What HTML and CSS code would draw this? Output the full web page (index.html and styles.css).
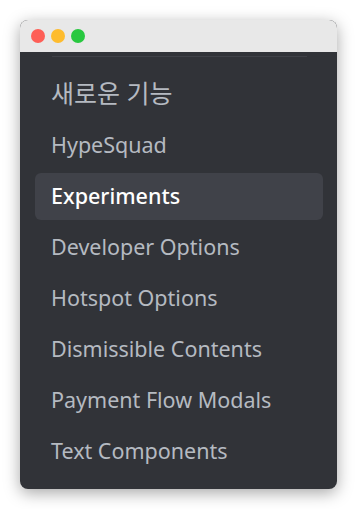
FILE: index.html
```html
<!DOCTYPE html>
<html>
  <head>
    <title>Settings</title>
    <link rel="stylesheet" href="styles.css">
  </head>
  <body>
    <div class="window">
      <div class="titlebar">
        <span class="light red"></span>
        <span class="light yellow"></span>
        <span class="light green"></span>
      </div>
      <div class="content">
        <div class="divider"></div>
        <div class="item korean">새로운 기능</div>
        <div class="item">HypeSquad</div>
        <div class="item selected">Experiments</div>
        <div class="item">Developer Options</div>
        <div class="item">Hotspot Options</div>
        <div class="item">Dismissible Contents</div>
        <div class="item">Payment Flow Modals</div>
        <div class="item">Text Components</div>
      </div>
    </div>
  </body>
</html>
```

FILE: styles.css
```css
body {
  margin: 0;
  background-color: #ffffff;
  font-family: "Noto Sans", "Noto Sans CJK KR", sans-serif;
}

.window {
  margin: 20px;
  width: 317px;
  height: 469px;
  border-radius: 8px;
  overflow: hidden;
  background-color: #313338;
  box-shadow: 0 4px 16px rgba(0, 0, 0, 0.35);
  display: flex;
  flex-direction: column;
}

.titlebar {
  height: 32px;
  background-color: #e8e8e8;
  display: flex;
  align-items: center;
  gap: 6px;
  padding-left: 11px;
  flex-shrink: 0;
}

.light {
  width: 14px;
  height: 14px;
  border-radius: 50%;
}

.red {
  background-color: #fe5f57;
}

.yellow {
  background-color: #febc2e;
}

.green {
  background-color: #28c840;
}

.content {
  padding: 4px 14px 0 15px;
  display: flex;
  flex-direction: column;
  gap: 4px;
}

.divider {
  height: 1px;
  margin: 0 16px 10px 17px;
  background-color: #3f4147;
}

.item {
  height: 47px;
  box-sizing: border-box;
  padding: 0 0 2px 16px;
  display: flex;
  align-items: center;
  border-radius: 6px;
  font-size: 21.5px;
  color: #b5bac1;
}

.korean {
  font-size: 25px;
  padding-bottom: 5px;
}

.selected {
  background-color: #404249;
  color: #ffffff;
  font-weight: 500;
}
```
